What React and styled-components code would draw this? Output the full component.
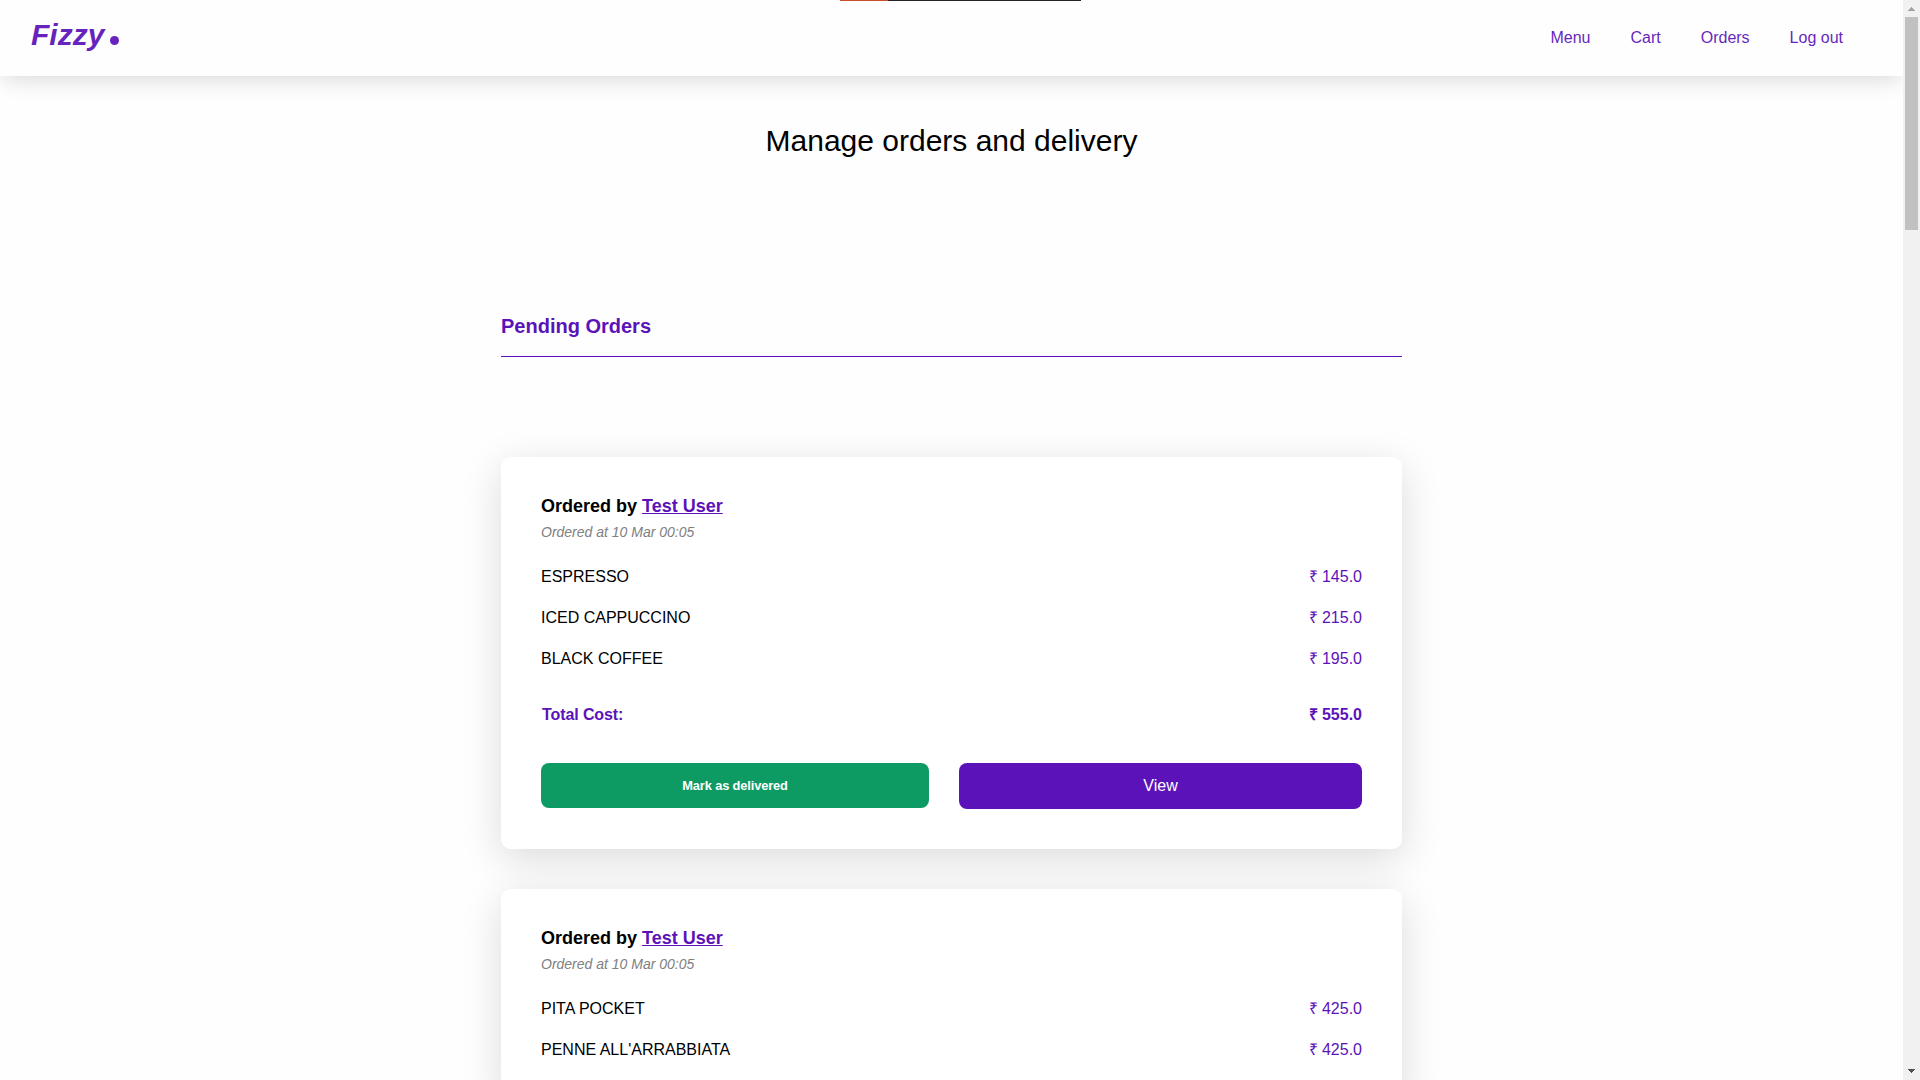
import React from "react";
import styled, { createGlobalStyle } from "styled-components";

const GlobalStyle = createGlobalStyle`
  * { box-sizing: border-box; margin: 0; padding: 0; }
  html, body { height: 100%; overflow: hidden; background: #fefefe; }
  body { font-family: "Liberation Sans", Arial, sans-serif; font-size: 16px; color: #000; }
`;

const Window = styled.div`
  position: relative;
  display: flex;
  width: 1920px;
  height: 1080px;
  overflow: hidden;
`;

const Page = styled.div`
  flex: 1;
  height: 1080px;
  overflow: hidden;
`;

const Header = styled.header`
  display: flex;
  justify-content: space-between;
  align-items: flex-start;
  height: 76px;
  padding: 18px 60px 0 31px;
  background: #fff;
  opacity: 0.93;
  box-shadow: 0 7px 20px -3px rgba(0, 0, 0, 0.15);
`;

const Logo = styled.a`
  display: flex;
  color: #5b13b9;
  font-size: 30px;
  line-height: 34px;
  font-weight: 700;
  font-style: italic;
`;

const LogoDot = styled.span`
  width: 9px;
  height: 9px;
  margin: 18px 0 0 6px;
  border-radius: 50%;
  background: #5b13b9;
`;

const Nav = styled.nav`
  display: flex;
  gap: 40px;
  padding-top: 11px;
`;

const NavLink = styled.a`
  color: #5b13b9;
  line-height: 18px;
`;

const Title = styled.h1`
  padding-top: 48px;
  font-size: 30px;
  line-height: 34px;
  font-weight: 400;
  text-align: center;
`;

const Orders = styled.main`
  width: 901px;
  margin: 157px auto 0;
`;

const SectionTitle = styled.h2`
  height: 42px;
  margin-bottom: 100px;
  border-bottom: 1px solid #5b13b9;
  color: #5b13b9;
  font-size: 20px;
  line-height: 22px;
`;

const Card = styled.section`
  margin-bottom: 40px;
  padding: 40px;
  border-radius: 10px;
  background: rgba(255, 255, 255, 0.9);
  box-shadow: 0 10px 40px rgba(0, 0, 0, 0.14);
`;

const Customer = styled.h3`
  margin-top: -1px;
  font-size: 18px;
  line-height: 20px;
`;

const CustomerLink = styled.a`
  color: #5b13b9;
  text-decoration: underline;
`;

const OrderedAt = styled.p`
  margin-top: 8px;
  color: #808080;
  font-size: 14px;
  line-height: 16px;
  font-style: italic;
`;

const Items = styled.ul`
  display: flex;
  flex-direction: column;
  gap: 23px;
  margin-top: 28px;
  list-style: none;
`;

const Row = styled.li`
  display: flex;
  justify-content: space-between;
  line-height: 18px;
`;

const Price = styled.span`
  color: #5b13b9;
`;

const Total = styled.div`
  display: flex;
  justify-content: space-between;
  margin-top: 38px;
  padding-left: 1px;
  color: #5b13b9;
  font-weight: 700;
  line-height: 18px;
`;

const TotalLabel = styled.span`
  letter-spacing: -0.1px;
`;

const Actions = styled.div`
  display: flex;
  align-items: flex-start;
  gap: 30px;
  margin-top: 39px;
`;

const Button = styled.button`
  width: ${(p) => (p.$primary ? 403 : 388)}px;
  height: ${(p) => (p.$primary ? 46 : 45)}px;
  border: 0;
  border-radius: 8px;
  background: ${(p) => (p.$primary ? "#5b13b9" : "#0d9b63")};
  color: #fff;
  font-family: inherit;
  font-size: ${(p) => (p.$primary ? "16px" : "12.8px")};
  font-weight: ${(p) => (p.$primary ? 400 : 700)};
  letter-spacing: ${(p) => (p.$primary ? "0" : "-0.12px")};
`;

const Scrollbar = styled.div`
  display: flex;
  flex-direction: column;
  align-items: center;
  width: 17px;
  height: 1080px;
  background: #f1f1f1;
`;

const Arrow = styled.svg`
  display: block;
  width: 17px;
  height: 17px;
`;

const Thumb = styled.div`
  width: 13px;
  height: 213px;
  margin-bottom: auto;
  background: #c1c1c1;
`;

const TopStrip = styled.div`
  position: absolute;
  top: 0;
  left: 840px;
  width: 241px;
  height: 1px;
  border-left: 48px solid #c94f2d;
  background: #222;
`;

const orders = [
  {
    id: 1,
    items: [["ESPRESSO", "145.0"], ["ICED CAPPUCCINO", "215.0"], ["BLACK COFFEE", "195.0"]],
    total: "555.0",
  },
  {
    id: 2,
    items: [["PITA POCKET", "425.0"], ["PENNE ALL'ARRABBIATA", "425.0"]],
  },
];

function OrderCard({ order }) {
  return (
    <Card>
      <Customer>
        Ordered by <CustomerLink>Test User</CustomerLink>
      </Customer>
      <OrderedAt>Ordered at 10 Mar 00:05</OrderedAt>
      <Items>
        {order.items.map(([name, price]) => (
          <Row key={name}>
            <span>{name}</span>
            <Price>₹ {price}</Price>
          </Row>
        ))}
      </Items>
      {order.total && (
        <>
          <Total>
            <TotalLabel>Total Cost:</TotalLabel>
            <span>₹ {order.total}</span>
          </Total>
          <Actions>
            <Button>Mark as delivered</Button>
            <Button $primary>View</Button>
          </Actions>
        </>
      )}
    </Card>
  );
}

export default function App() {
  return (
    <Window>
      <GlobalStyle />
      <Page>
        <Header>
          <Logo>
            Fizzy
            <LogoDot />
          </Logo>
          <Nav>
            {["Menu", "Cart", "Orders", "Log out"].map((label) => (
              <NavLink key={label}>{label}</NavLink>
            ))}
          </Nav>
        </Header>
        <Title>Manage orders and delivery</Title>
        <Orders>
          <SectionTitle>Pending Orders</SectionTitle>
          {orders.map((order) => (
            <OrderCard key={order.id} order={order} />
          ))}
        </Orders>
      </Page>
      <Scrollbar>
        <Arrow viewBox="0 0 17 17" shapeRendering="crispEdges">
          <path d="M5 11h7v-1h-1V9h-1V8H9V7H8v1H7v1H6v1H5z" fill="#a3a3a3" />
        </Arrow>
        <Thumb />
        <Arrow viewBox="0 0 17 17" shapeRendering="crispEdges">
          <path d="M5 6h7v1h-1v1h-1v1H9v1H8V9H7V8H6V7H5z" fill="#505050" />
        </Arrow>
      </Scrollbar>
      <TopStrip />
    </Window>
  );
}
